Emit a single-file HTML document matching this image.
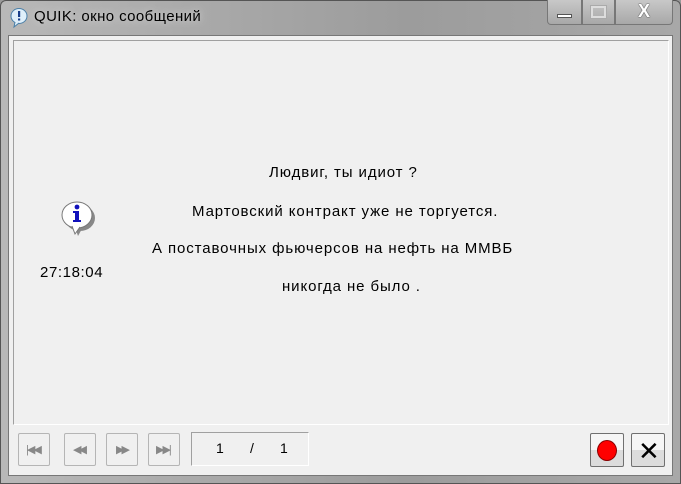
<!DOCTYPE html>
<html><head><meta charset="utf-8"><style>
*{margin:0;padding:0;box-sizing:border-box}
body{width:681px;height:484px;overflow:hidden;background:#9a9a9a;font-family:"Liberation Sans",sans-serif;position:relative}
.frame{position:absolute;left:0;top:0;width:681px;height:484px;background:linear-gradient(90deg,#b8b8b8 0%,#a9a9a9 30%,#9c9c9c 60%,#a8a8a8 100%);border:1px solid #555;border-radius:6px 6px 0 0}
.title{position:absolute;left:34px;top:8px;font-size:15px;letter-spacing:0.4px;color:#000;text-shadow:0 0 8px #ddd}
.ctl{position:absolute;top:0;height:25px;border:1px solid #777;border-top:none;background:linear-gradient(#c8c8c8,#a8a8a8);}
.client{position:absolute;left:8px;top:35px;width:665px;height:441px;background:#f0f0f0;border:1px solid #777}
.panel{position:absolute;left:4px;top:4px;width:656px;height:385px;border:1px solid #a0a0a0;border-right-color:#fff;border-bottom-color:#fff;background:#f0f0f0}
.msg{position:absolute;font-size:15px;letter-spacing:0.9px;color:#000;white-space:nowrap}
.btn{position:absolute;top:397px;width:32px;height:33px;border:1px solid #b5b5b5;border-radius:2px;background:#f0f0f0}
.btn2{position:absolute;top:397px;width:34px;height:34px;border:1px solid #707070;border-radius:2px;background:linear-gradient(#f6f6f6 50%,#dcdcdc 50%)}
</style></head><body>
<div class="frame"></div>
<svg style="position:absolute;left:9px;top:7px" width="20" height="22" viewBox="0 0 20 22"><ellipse cx="10" cy="9" rx="8" ry="7.5" fill="#dfeffa" stroke="#4a7fa8"/><path d="M6 15 L5 20 L10 16" fill="#dfeffa" stroke="#4a7fa8"/><rect x="9" y="4" width="2.2" height="6" fill="#1a3f8a"/><rect x="9" y="11.5" width="2.2" height="2" fill="#1a3f8a"/></svg>
<div class="title">QUIK: окно сообщений</div>
<div class="ctl" style="left:547px;width:35px;border-radius:0 0 0 4px"><div style="position:absolute;left:9px;top:14px;width:15px;height:4px;background:#fff;border:1px solid #555"></div></div>
<div class="ctl" style="left:582px;width:33px"><div style="position:absolute;left:8px;top:6px;width:15px;height:12px;border:2px solid #ddd;box-shadow:0 0 0 1px #aaa"></div></div>
<div class="ctl" style="left:615px;width:58px;border-radius:0 0 4px 0"><div style="position:absolute;left:0;width:100%;top:1px;text-align:center;font-size:18px;font-weight:bold;color:#fff;text-shadow:0 0 1px #333,0 0 1px #333">X</div></div>
<div class="client">
<div class="panel">
<svg style="position:absolute;left:45px;top:158px" width="40" height="40" viewBox="0 0 40 40"><ellipse cx="19" cy="17" rx="15" ry="13" fill="#888" transform="translate(2,2)"/><path d="M16 28 L19 37 L24 28Z" fill="#888"/><ellipse cx="18" cy="16" rx="15" ry="13" fill="#fff" stroke="#777"/><path d="M13 27 L16 35 L21 28" fill="#fff" stroke="#777"/><circle cx="18" cy="8" r="2.4" fill="#1111bb"/><path d="M14 12h6v9h2v2h-8v-2h2v-7h-2z" fill="#1111bb"/></svg>
<div class="msg" style="left:26px;top:223px;letter-spacing:0.6px">27:18:04</div>
<div class="msg" style="left:255px;top:123px">Людвиг, ты идиот ?</div>
<div class="msg" style="left:178px;top:162px">Мартовский контракт уже не торгуется.</div>
<div class="msg" style="left:138px;top:199px">А поставочных фьючерсов на нефть на ММВБ</div>
<div class="msg" style="left:268px;top:237px">никогда не было .</div>
</div>
<div class="btn" style="left:9px"><span style="position:absolute;left:7px;top:9px;font-size:11px;color:#888;letter-spacing:-2px">|◀◀</span></div>
<div class="btn" style="left:55px"><span style="position:absolute;left:8px;top:9px;font-size:11px;color:#888;letter-spacing:-3px">◀◀</span></div>
<div class="btn" style="left:97px"><span style="position:absolute;left:9px;top:9px;font-size:11px;color:#888;letter-spacing:-3px">▶▶</span></div>
<div class="btn" style="left:139px"><span style="position:absolute;left:7px;top:9px;font-size:11px;color:#888;letter-spacing:-2px">▶▶|</span></div>
<div style="position:absolute;left:182px;top:396px;width:118px;height:34px;border:1px solid #a0a0a0;border-right-color:#fff;border-bottom-color:#fff;font-size:14px">
<span style="position:absolute;left:24px;top:7px">1</span><span style="position:absolute;left:58px;top:7px">/</span><span style="position:absolute;left:88px;top:7px">1</span></div>
<div class="btn2" style="left:581px"><div style="position:absolute;left:6px;top:6px;width:20px;height:21px;border-radius:50%;background:#f00;border:1px solid #800"></div></div>
<div class="btn2" style="left:622px"><span style="position:absolute;left:6px;top:2px;font-size:26px;color:#000">✕</span></div>
</div>
</body></html>
